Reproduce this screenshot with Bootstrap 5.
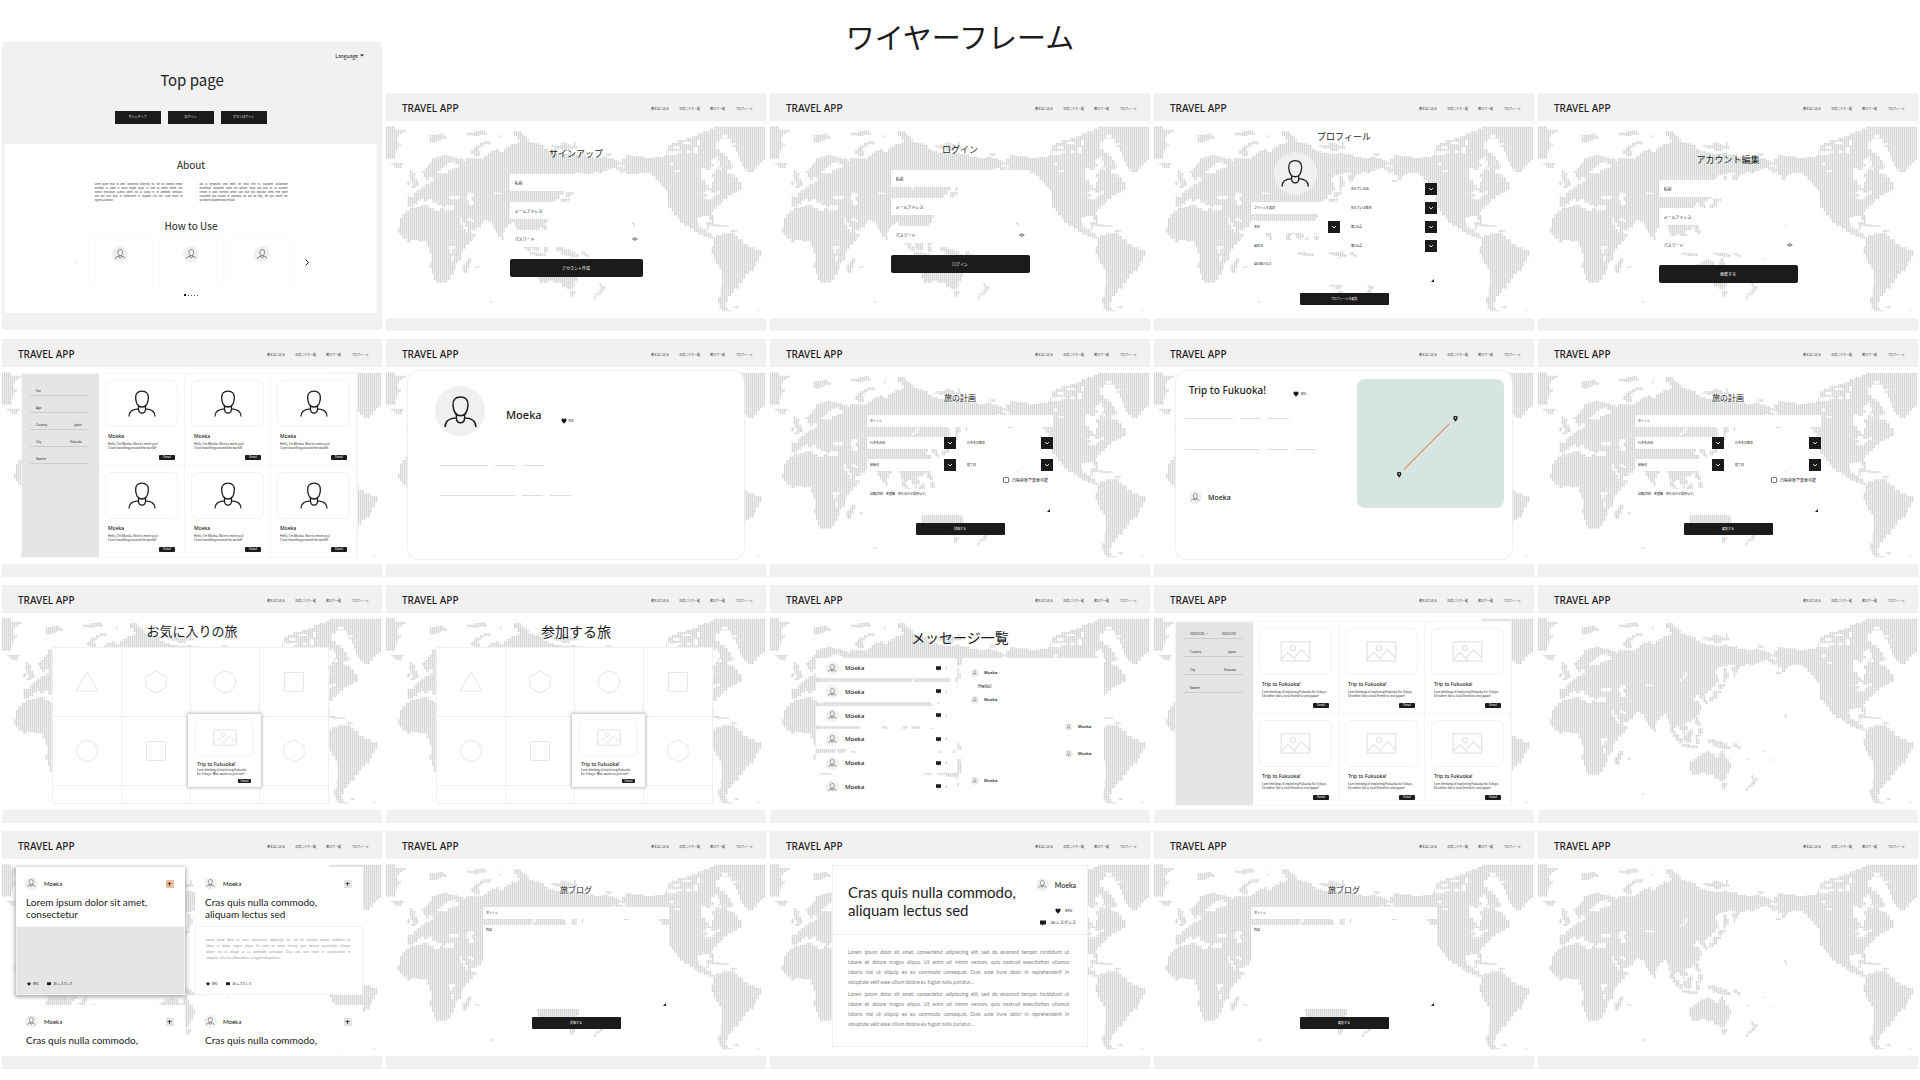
<!DOCTYPE html>
<html lang="ja">
<head>
<meta charset="utf-8">
<meta name="viewport" content="width=device-width, initial-scale=1">
<title>ワイヤーフレーム</title>
<link href="https://cdn.jsdelivr.net/npm/bootstrap@5.3.0/dist/css/bootstrap.min.css" rel="stylesheet">
<style>
  body { font-family: "Noto Sans", "Noto Sans CJK JP", sans-serif; color: #1b1b1b; background: #fff; font-size: 3px; line-height: 4px; }
  a, a:hover { color: inherit; text-decoration: none; }
  button { border: 0; padding: 0; font: inherit; }
  h1, h2, h3, p { margin: 0; font-weight: 400; }
  svg { display: block; }
  .jp { font-family: "Noto Sans CJK JP", sans-serif; }
  .gill { font-family: Lato, "Noto Sans CJK JP", sans-serif; }

  /* board of screens */
  .board { display: grid; grid-template-columns: repeat(5, minmax(0, 1fr)); column-gap: 4px; row-gap: 8px; padding: 0 2px; }
  .board-title { grid-area: 1 / 1 / 2 / 6; height: 85px; padding-top: 14px; font-size: 29px; line-height: 44px; text-align: center; }
  .top-page { grid-area: 1 / 1 / 3 / 2; align-self: end; height: 288px; margin-bottom: 1px; background: #f1f1f1; }
  .second { grid-column: 2; }
  .bar { height: 28px; background: #f1f1f1; padding: 1px 13px 0 16px; }
  .brand, .brand:hover { font-size: 10px; line-height: 14px; font-weight: 500; }
  .bar nav { gap: 10px; padding-top: 3px; color: #333; }
  .foot { height: 13px; background: #f1f1f1; }
  .stage { display: grid; height: 197px; overflow: hidden; }
  .stage > * { grid-area: 1 / 1; min-width: 0; }
  .world { width: 100%; height: 197px; }

  /* forms */
  .ttl { font-size: 9px; line-height: 12px; text-align: center; }
  .ttl-s { font-size: 8px; margin-bottom: 11px; }
  .ttl-l { font-size: 14px; line-height: 20px; padding: 8px 0 6px; text-align: center; }
  .ttl-l.long { font-size: 13px; }
  .ttl-l.mid { padding: 14px 0 11px; }
  .form-in { width: 133px; gap: 11px; padding-top: 27px; }
  .form-in .ttl { margin-bottom: 3px; }
  .form-in.wide { width: 139px; padding-top: 23px; }
  .form-in.wide.down { padding-top: 33px; }
  .box { display: flex; align-items: center; height: 17px; padding: 0 5px; background: #fff; }
  .box input, .pick select, .pick input, .note, .side input { border: 0; outline: 0; background: transparent; color: #222; padding: 0; font: inherit; min-width: 0; width: 100%; appearance: none; resize: none; }
  .box input { font-size: 4px; line-height: 6px; height: 6px; }
  ::placeholder { color: #222; opacity: 1; }
  .btn-dark1 { background: #1b1b1b; color: #fff; border-radius: 2px; height: 18px; margin-top: 1px; font-size: 4px; line-height: 17px; }
  .btn-dark2 { background: #1b1b1b; color: #fff; border-radius: 1px; height: 12px; width: 89px; line-height: 12px; }
  .sheet { width: 186px; padding-top: 25px; }
  .sheet.up { padding-top: 10px; }
  .pair { display: flex; justify-content: space-between; align-items: flex-end; margin: 9px 0 7px; }
  .pair > div { display: flex; flex-direction: column; width: 89px; gap: 7px; }
  .rows { display: flex; flex-direction: column; gap: 10px; }
  .duo { display: grid; grid-template-columns: 89px 89px; justify-content: space-between; row-gap: 10px; }
  .pick { display: flex; align-items: center; height: 12px; padding-left: 3px; background: #fff; }
  .pick select, .pick input { height: 8px; line-height: 8px; }
  .pick svg { width: 12px; height: 12px; flex: none; }
  .note { display: block; background: #fff; padding: 3px; height: 26px; }
  .note.tall { height: 84px; }
  .note-wrap { display: flex; align-items: flex-end; background: #fff; margin: 6px 0 8px; }
  .note-wrap svg { width: 3px; height: 3px; flex: none; margin: 3px; }
  .agree { display: flex; justify-content: flex-end; align-items: center; gap: 3px; margin: 6px 5px 0 0; font-size: 4px; line-height: 6px; }
  .tick { appearance: none; width: 6px; height: 6px; border: 1px solid #777; border-radius: 1px; background: #fff; margin: 0; }

  /* avatars */
  .face { display: inline-flex; align-items: center; justify-content: center; flex: none; border-radius: 50%; background: #f0f0f0; }
  .face svg { width: 66%; height: 66%; }
  .f43 { width: 43px; height: 43px; align-self: center; } .f50 { width: 50px; height: 50px; } .f16 { width: 16px; height: 16px; }
  .f13 { width: 13px; height: 13px; } .f8 { width: 8px; height: 8px; }
  .nm { font-size: 6px; line-height: 8px; font-weight: 500; margin-left: 6px; }
  .nm7 { font-size: 7px; line-height: 10px; font-weight: 500; margin-left: 6px; }
  .who-line { display: flex; align-items: center; }

  /* catalogue screens */
  .cat { width: 337px; height: 185px; margin: 6px 0 0 19px; border: 1px solid #f5f5f5; background: #fff; }
  .cat.low { margin: 8px 0 0 21px; }
  .side { width: 77px; background: #e5e5e5; padding: 13px 10px 0 8px; }
  .side .ln { display: flex; justify-content: space-between; height: 9px; margin-bottom: 8px; padding: 2px 7px 0 6px; border-bottom: 1px solid #ccc; width: 100%; background: transparent; text-align: left; white-space: nowrap; }
  .low .side { padding-top: 8px; }
  .low .side .ln { margin-bottom: 9px; }
  .side input { height: 4px; text-align: right; }
  .tiles { display: grid; grid-template-columns: repeat(3, 1fr); grid-template-rows: 92px 92px; flex: 1; }
  .tile { border-right: 1px solid #f5f5f5; border-bottom: 1px solid #f5f5f5; padding: 6px; }
  .pic { display: flex; align-items: center; justify-content: center; height: 47px; border: 1px solid #f3f3f3; border-radius: 6px; }
  .who { font-size: 5px; line-height: 6px; font-weight: 500; margin: 6px 3px 3px; }
  .blurb { margin: 0 3px 5px; white-space: nowrap; }
  .more { display: block; background: #1b1b1b; color: #fff; border-radius: 1px; width: 16px; height: 5px; line-height: 5px; margin: 0 3px 0 auto; }

  /* detail screens */
  .panel-r { width: 336px; height: 188px; margin: 4px 0 0 22px; border-radius: 11px; background: #fff; box-shadow: 0 0 2px 1px #eee; }
  .hero { display: flex; align-items: center; padding: 15px 0 0 27px; }
  .hero h2 { font-size: 11px; line-height: 16px; font-weight: 500; margin: 7px 19px 0 21px; }
  .hero .react { margin-top: 19px; }
  .rules { display: flex; gap: 7px; margin: 29px 0 0 32px; }
  .rules i { height: 1px; width: 21px; background: #dcdcdc; }
  .rules i.w48 { width: 48px; } .rules i.w75 { width: 75px; }
  .trip { padding: 12px 0 0 9px; }
  .trip h2 { font-size: 10px; line-height: 14px; font-weight: 500; margin: 0 27px 0 4px; white-space: nowrap; }
  .trip .react { margin-top: 7px; }
  .trip .rules { margin: 21px 0 30px; }
  .trip .who-line { margin: 41px 0 0 4px; }
  .route { width: 147px; height: 129px; border-radius: 8px; background: #d6e5df; margin: 8px 8px 0 0; }

  /* shape grid */
  .shapes { display: grid; grid-template-columns: repeat(4, 69px); grid-template-rows: 69px 69px 18px; border: solid #f0f0f0; border-width: 1px 0 0 1px; background: #fff; width: 277px; margin-left: 50px; }
  .shapes > div { display: flex; align-items: center; justify-content: center; border: solid #f0f0f0; border-width: 0 1px 1px 0; position: relative; }
  .pop { position: absolute; left: -3px; top: -3px; width: 73px; height: 73px; background: #fff; box-shadow: 0 0 3px 1px #bbb; padding: 5px 7px; z-index: 1; }
  .pop .pic { height: 37px; border-radius: 4px; }
  .pop .who { margin: 5px 2px 1px; }
  .pop .blurb { margin: 0 2px 3px; }
  .pop .more { width: 13px; height: 4px; line-height: 4px; }

  /* messages */
  .mailroom { display: flex; gap: 5px; padding-left: 46px; }
  .inbox { display: flex; flex-direction: column; justify-content: space-between; width: 141px; height: 139px; }
  .mail { display: flex; align-items: center; height: 20px; padding: 0 10px; background: #fff; border-radius: 2px; }
  .talk { width: 142px; height: 139px; background: #fff; border-radius: 2px; padding: 11px 9px; }
  .said { display: flex; align-items: center; gap: 5px; height: 8px; width: 30px; margin-bottom: 19px; font-size: 4px; font-weight: 600; }
  .said.mine { margin-left: auto; }
  .said.first { margin-bottom: 6px; }
  .talk p { font-size: 5px; line-height: 7px; margin: 0 0 6px 7px; }

  /* blog */
  .posts { display: grid; grid-template-columns: 169px 168px; column-gap: 10px; grid-auto-rows: 128px; row-gap: 10px; height: 190px; overflow: hidden; padding: 8px 0 0 14px; align-content: start; }
  .post { background: #fff; }
  .post.on { box-shadow: 0 1px 4px 1px #aaa; }
  .post .hd { height: 59px; padding: 10px 11px 0 9px; }
  .post h3 { font-size: 10px; line-height: 12px; margin: 6px 0 0 1px; white-space: nowrap; }
  .post .bd { height: 69px; padding: 10px 12px 0 10px; border: 1px solid #f3f3f3; }
  .post.on .bd { background: #e5e5e5; }
  .plus { width: 8px; height: 8px; background: #e3e3e3; margin-left: auto; }
  .on .plus { background: #f2bd9c; }
  .lor { color: #999; line-height: 6px; white-space: nowrap; height: 45px; }
  .lor span, .essay span, .tiny span { display: block; text-align-last: justify; }
  .acts { display: flex; gap: 9px; }
  .react { display: flex; align-items: center; gap: 2px; white-space: nowrap; }
  .react svg { width: 4px; height: 4px; }
  .react.big svg { width: 6px; height: 6px; }
  .article { width: 256px; height: 182px; margin: 6px 0 0 62px; background: #fff; border: 1px solid #f0f0f0; }
  .art-head { display: flex; justify-content: space-between; height: 69px; border-bottom: 1px solid #f0f0f0; padding: 12px 11px 0 15px; margin-bottom: 12px; }
  .art-head h2 { font-size: 15px; line-height: 18px; padding-top: 5px; white-space: nowrap; }
  .art-side { display: flex; flex-direction: column; align-items: flex-end; font-size: 4px; line-height: 6px; }
  .art-side .react { gap: 4px; margin-top: 6px; }
  .art-side .who-line + .react { margin: 17px 4px 0 0; }
  .essay { color: #808080; font-size: 5px; line-height: 10px; white-space: nowrap; width: 221px; margin: 0 0 2px 15px; }

  /* top page */
  .lang { display: flex; justify-content: flex-end; padding: 10px 18px 0 0; }
  .lang button { display: flex; align-items: center; gap: 2px; background: transparent; font-size: 5px; line-height: 7px; }
  .top-h { font-size: 15px; line-height: 20px; margin-top: 11px; text-align: center; }
  .top-acts { display: flex; justify-content: center; gap: 7px; margin: 21px 3px 20px 0; }
  .tbtn { width: 46px; height: 13px; line-height: 13px; background: #1b1b1b; color: #fff; }
  .intro { height: 169px; margin: 0 5px 0 3px; padding-top: 14px; background: #fff; }
  .intro h2 { font-size: 10px; line-height: 14px; text-align: center; }
  .tiny-cols { display: flex; justify-content: center; gap: 17px; margin: 11px 0 16px; }
  .tiny { font-size: 2px; line-height: 4px; width: 88px; white-space: nowrap; }
  .deck { display: flex; justify-content: center; align-items: center; gap: 10px; margin-top: 5px; }
  .deck > div { display: flex; gap: 6px; }
  .deck button { background: transparent; }
  .how { width: 65px; height: 48px; border: 1px solid #fafafa; padding-top: 7px; text-align: center; }
  .dots { display: flex; justify-content: center; align-items: center; gap: 2px; margin-top: 8px; }
  .dots i { width: 1px; height: 1px; background: #555; } .dots i:first-child { width: 2px; height: 2px; background: #111; }
</style>
<script src="https://cdn.jsdelivr.net/npm/bootstrap@5.3.0/dist/js/bootstrap.bundle.min.js"></script>
</head>
<body>

<svg width="0" height="0" class="position-absolute" aria-hidden="true">
  <defs>
    <pattern id="grain" x="6" y="93" width="6" height="6" patternUnits="userSpaceOnUse"><rect width="6" height="6" fill="#ebedec"/><rect width="3" height="6" fill="#dcdfde"/><rect width="3" height="3" fill="#cfd4d2"/></pattern>
    <symbol id="map" viewBox="6 93 1140 591" preserveAspectRatio="none">
      <g fill="url(#grain)">
        <path d="M5 109H33V119H66V127H55V133H45V142H39V150H42V160H50V168H43V178H38V190H34V206H5Z"/>
        <path d="M20 218H58V226H53V234H35V229H28V223H20Z"/>
        <path d="M137 135H160V131H180V138H188V147H170V153H158V157H137Z"/>
        <path d="M246 128H272V123H290V121H303V126H308V134H285V138H268V136H250Z"/>
        <path d="M346 138h6v5h-6zM350 130h5v5h-5zM275 528h10v5h-10zM316 634h10v5h-10zM742 397h10v13h-5v-8h-5zM1120 659h7v4h-7zM665 190H683V197H665ZM703 532h5v5h-5zM680 505h5v5h-5zM632 530h6v6h-6zM1050 648h14v7h-12z"/>
        <path d="M260 192V180H268V172H276V166H288V158H298V154H320V163H300V168H290V175H284V184H288V198H270V192Z"/>
        <path d="M390 124H411V131H418V137H428V145H434V156H408V150H400V138H390Z"/>
        <path d="M500 166H530V158H548V163H560V168H570V156H576V168H580V176H556V183H534V176H512V172H500Z"/>
        <path d="M75 240H85V248H95V256H92V266H100V276H104V288H95V294H80V288H86V276H80V265H76V255H80ZM68 274H78V286H68Z"/>
        <path d="M118 262V250H113V242H122V234H130V226H137V218H143V204H158V198H175V194H192V198H203V202H222V206H238V213H246V205H300V198H310V190H320V182H335V178H345V185H360V176H368V170H380V162H400V157H415V152H432V156H450V160H465V165H480V176H492V184H510V188H530V191H560V188H575V193H605V200H630V204H655V200H672V205H690V210H703V216H712V224H702V230H716V240H722V248H706V240H696V234H684V238H670V243H656V250H640V246H628V252H612V262H606V272H598V284H592V268H588V256H596V248H576V252H560V256H545V264H538V276H545V290H548V302H540V314H528V326H516V334H506V345H510V360H500V350H490V338H480V348H474V356H490V368H497V384H492V400H482V412H468V420H452V424H448V432H456V444H446V456H440V444H430V432H420V438H414V452H420V464H412V450H404V428H398V410H392V396H382V404H372V414H362V428H357V438H360V450H352V440H342V430H336V420H330V408H325V396H313V390H300V400H291V412H278V420H262V432H276V442H266V454H256V464H246V476H236V488H232V512H222V520H215V540H210V555H200V570H190V578H156V570H150V552H144V534H137V518H142V490H136V470H128V454H102V450H80V456H68V446H55V436H48V428H42V412H48V384H55V372H64V362H76V353H96V350H70V320H90V308H98V300H110V290H122V282H138V275H146V262H134V270H126V262Z"/>
        <path d="M562 258H572V272H578V290H570V302H562ZM546 306H570V314H560V322H546ZM530 326H556V334H544V350H532V358H514V366H508V356H520V344H530Z"/>
        <path d="M476 406H488V420H494V432H484V426H476ZM486 438H500V456H488ZM402 436H412V446H420V456H430V468H440V484H428V476H418V466H410V452H402ZM436 486H462V490H486V498H452V494H436ZM442 458H452V448H462V442H470V460H466V482H448V476H442ZM478 458H494V464H484V470H492V486H480ZM516 472H540V478H560V484H574V492H584V502H560V498H544V494H530V484H516ZM592 484H604V492H614V502H604V496H592Z"/>
        <path d="M460 545V538H472V530H482V522H494V514H508V508H520V512H530V516H536V526H548V514H554V504H562V516H568V530H578V542H585V560H580V574H572V590H566V598H548V590H534V578H508V572H492V578H466V566H460ZM557 603H573V612H569V620H557Z"/>
        <path d="M645 580H653V588H665V598H658V608H650V616H636V628H628V618H634V610H644V600H650V590H645Z"/>
        <path d="M235 524H245V514H250V506H262V520H256V534H250V548H236V540H235Z"/>
        <path d="M714 206H725V196H745V199H780V204H812V200H840V196H846V184H852V166H862V158H880V150H905V143H925V138H940V130H956V124H978V116H990V110H1144V210H1136V216H1128V226H1118V238H1110V246H1090V238H1080V228H1074V216H1068V200H1062V185H1056V172H1046V164H1026V160H1006V166H996V178H1008V188H1022V198H1032V210H1040V224H1046V236H1040V252H1052V262H1062V276H1074V300H1060V308H1046V316H1030V326H1018V336H1010V346H998V356H988V366H984V376H990V396H982V390H975V378H955V382H940V398H944V412H956V418H968V408H974V420H968V428H982V440H992V446H974V440H958V434H942V426H930V416H916V408H900V398H888V388H880V376H870V364H862V354H852V336H850V300H842V290H834V280H824V270H814V258H802V250H786V248H768V252H756V260H748V270H735V276H720V270H738V256H726V244H715V236H722V226H714Z"/>
        <path d="M968 396H990V402H1006V406H1034V411H1000V408H968ZM1040 419H1058V427H1040Z"/>
        <path d="M982 492V470H988V446H996V436H1014V430H1052V438H1062V448H1076V462H1092V472H1112V480H1132V500H1124V514H1116V530H1110V544H1096V552H1084V566H1076V580H1064V596H1050V608H1042V618H1032V636H1026V652H1032V660H1046V664H1014V656H1006V640H1002V622H1010V590H1014V560H1012V536H1004V522H996V508H988V492Z"/>
      </g>
      <g fill="#fff">
        <path d="M88 351V342H100V332H110V326H120V334H132V326H145V338H158V346H174V352H186V346H210V360H180V354H168V362H150V354H134V346H112V350Z"/>
        <path d="M194 318H224V328H196ZM252 310H268V320H262V332H268V345H254V330H248V318H252ZM160 250V242H170V234H180V226H190V218H206V214H212V222H224V234H206V240H192V250ZM330 308H352V312H330ZM432 292H440V284H446V272H452V284H446V292H438V298H432Z"/>
        <path d="M194 468H213V476H205V488H198V476H194ZM203 498H208V514H203ZM228 385H234V398H242V412H250V426H246V416H238V404H230V396H228ZM252 385H262V390H270V396H262V392H252Z"/>
        <path d="M952 234H966V240H980V230H990V222H982V208H992V202H1002V214H1008V228H1002V238H994V250H984V262H990V276H984V294H974V284H964V270H952ZM956 308H966V300H980V308H1000V304H1008V312H994V318H986V328H962V320H970V312H956Z"/>
        <path d="M1014 134H1030V144H1014ZM995 155H1008V146H1040V160H1058V165H995ZM868 168H886V176H868ZM896 156H920V162H896ZM850 184H894V190H880V196H850ZM930 172H942V190H930ZM940 150H948V166H940ZM872 240H888V246H872ZM858 218H868V226H858ZM908 182H920V190H908ZM1030 238H1040V250H1030ZM1004 232H1012V240H1004Z"/>
      </g>
    </symbol>
    <symbol id="person" viewBox="0 0 88 84"><g fill="none" stroke="#1b1b1b" stroke-width="4"><path d="M44 3C57 3 65 11 64 25C63 42 56 53 44 53S25 42 24 25C23 11 31 3 44 3Z"/><path d="M33 50V60C34 76 54 76 55 60V50M3 83C3 67 15 60 33 59M55 59C73 60 85 67 85 83"/></g></symbol>
    <symbol id="image" viewBox="0 0 72 50"><path d="M2 2H70V48H2ZM2 44L18 27L38 48M32 42L50 20L70 41M24 17A6 6 0 1 0 36 17A6 6 0 1 0 24 17" fill="none" stroke="#e3e3e3" stroke-width="3"/></symbol>
    <symbol id="heart" viewBox="0 0 16 16"><path d="M8 15L2 8.500C-1 4 4-1 8 3C12-1 17 4 14 8.500Z" fill="#1b1b1b"/></symbol>
    <symbol id="chat" viewBox="0 0 16 16"><path d="M0 1H16V12H9L6 16V12H0Z" fill="#1b1b1b"/></symbol>
    <symbol id="drop" viewBox="0 0 36 36"><path d="M0 0H36V36H0Z" fill="#1b1b1b"/><path d="M12 15L18 21L24 15" fill="none" stroke="#fff" stroke-width="2.500"/></symbol>
    <symbol id="eye" viewBox="0 0 18 12"><path d="M1 6Q9-3 17 6Q9 15 1 6Z" fill="none" stroke="#444" stroke-width="2"/><circle cx="9" cy="6" r="2" fill="#444"/></symbol>
    <symbol id="grip" viewBox="0 0 8 8"><path d="M8 0V8H0Z" fill="#1b1b1b"/></symbol>
    <symbol id="pin" viewBox="0 0 14 18"><path d="M7 18C2 12 0 9 0 6.500C0 2.500 3 0 7 0S14 2.500 14 6.500C14 9 12 12 7 18ZM7 4A2.500 2.500 0 1 0 7 9A2.500 2.500 0 1 0 7 4" fill="#1b1b1b" fill-rule="evenodd"/></symbol>
    <symbol id="add" viewBox="0 0 8 8"><path d="M3.500 2V6M1.500 3.500H5.500" stroke="#444" fill="none"/></symbol>
    <symbol id="s-tri" viewBox="0 0 24 24"><path d="M12 2L23 21H1Z" fill="none" stroke="#e6e6e6"/></symbol>
    <symbol id="s-hex" viewBox="0 0 24 24"><path d="M12 1L22 6.500V17.500L12 23L2 17.500V6.500Z" fill="none" stroke="#e6e6e6"/></symbol>
    <symbol id="s-cir" viewBox="0 0 24 24"><circle cx="12" cy="12" r="10.500" fill="none" stroke="#e6e6e6"/></symbol>
    <symbol id="s-sq" viewBox="0 0 24 24"><path d="M2.500 2.500H21.500V21.500H2.500Z" fill="none" stroke="#e6e6e6"/></symbol>
  </defs>
</svg>

<template id="t-bar"><header class="bar d-flex align-items-center justify-content-between"><a href="#" class="brand">TRAVEL APP</a><nav class="d-flex jp"><a href="#">旅をはじめる</a><a href="#">お気に入り一覧</a><a href="#">旅ログ一覧</a><a href="#">プロフィール</a></nav></header></template>
<template id="t-foot"><footer class="foot"></footer></template>
<template id="t-map"><svg class="world" aria-hidden="true"><use href="#map"/></svg></template>
<template id="t-person"><article class="tile"><div class="pic"><svg width="28" height="27"><use href="#person"/></svg></div><h3 class="who">Moeka</h3><p class="blurb">Hello, I'm Moeka. Nice to meet you!<br>I love travelling around the world!!</p><button class="more">Detail</button></article></template>
<template id="t-trip"><article class="tile"><div class="pic"><svg width="31" height="21"><use href="#image"/></svg></div><h3 class="who">Trip to Fukuoka!</h3><p class="blurb">I am thinking of exploring Fukuoka for 3 days.<br>I'd rather like a local friend to visit Japan!</p><button class="more">Detail</button></article></template>
<template id="t-mail"><a href="#" class="mail"><span class="face f13"><svg><use href="#person"/></svg></span><span class="nm">Moeka</span><svg class="ms-auto me-1" width="5" height="5"><use href="#chat"/></svg><span class="text-secondary">2</span></a></template>
<template id="t-how"><div class="how d-block"><span class="face f16"><svg><use href="#person"/></svg></span></div></template>
<template id="t-by"><div class="who-line"><span class="face f13"><svg><use href="#person"/></svg></span><span class="nm">Moeka</span><button class="plus" aria-label="追加"><svg width="8" height="8"><use href="#add"/></svg></button></div></template>
<template id="t-acts"><div class="acts"><span class="react"><svg><use href="#heart"/></svg>890</span><span class="react"><svg><use href="#chat"/></svg>36 レスポンス</span></div></template>
<template id="t-shapes">
  <div><svg width="24" height="24"><use href="#s-tri"/></svg></div><div><svg width="24" height="24"><use href="#s-hex"/></svg></div><div><svg width="24" height="24"><use href="#s-cir"/></svg></div><div><svg width="24" height="24"><use href="#s-sq"/></svg></div>
  <div><svg width="24" height="24"><use href="#s-cir"/></svg></div><div><svg width="24" height="24"><use href="#s-sq"/></svg></div>
  <div><article class="pop"><div class="pic"><svg width="24" height="17"><use href="#image"/></svg></div><h3 class="who">Trip to Fukuoka!</h3><p class="blurb">I am thinking of exploring Fukuoka<br>for 3 days. Who wants to join me?</p><button class="more">Detail</button></article></div>
  <div><svg width="24" height="24"><use href="#s-hex"/></svg></div><div></div><div></div><div></div><div></div>
</template>
<template id="t-login">
  <div class="box"><input aria-label="名前" placeholder="名前"></div>
  <div class="box"><input aria-label="メールアドレス" placeholder="メールアドレス"></div>
  <div class="box"><input aria-label="パスワード" placeholder="パスワード"><svg width="6" height="4"><use href="#eye"/></svg></div>
</template>
<template id="t-plan">
  <div class="rows">
    <div class="pick"><input aria-label="タイトル" placeholder="タイトル"></div>
    <div class="duo">
      <div class="pick"><select aria-label="行き先の国"><option>行き先の国</option></select><svg><use href="#drop"/></svg></div>
      <div class="pick"><select aria-label="行き先の都市"><option>行き先の都市</option></select><svg><use href="#drop"/></svg></div>
      <div class="pick"><select aria-label="開始日"><option>開始日</option></select><svg><use href="#drop"/></svg></div>
      <div class="pick"><select aria-label="終了日"><option>終了日</option></select><svg><use href="#drop"/></svg></div>
    </div>
  </div>
  <label class="agree"><input type="checkbox" class="tick"> 日程前後で変更可能</label>
  <div class="note-wrap"><textarea class="note" aria-label="詳細" placeholder="詳細(目的、希望職、待ち合わせ場所など)"></textarea><svg><use href="#grip"/></svg></div>
</template>
<template id="t-write">
  <div class="pick"><input aria-label="タイトル" placeholder="タイトル"></div>
  <div class="note-wrap"><textarea class="note tall" aria-label="内容" placeholder="内容"></textarea><svg><use href="#grip"/></svg></div>
</template>

<main class="board">
  <h1 class="board-title jp">ワイヤーフレーム</h1>

  <section class="top-page jp">
    <div class="lang"><button>Language <svg width="4" height="3" viewBox="0 0 8 6"><path d="M0 1H8L4 5Z" fill="#1b1b1b"/></svg></button></div>
    <h2 class="top-h">Top page</h2>
    <div class="top-acts"><button class="tbtn">サインアップ</button><button class="tbtn">ログイン</button><button class="tbtn">ゲストログイン</button></div>
    <div class="intro">
      <h2>About</h2>
      <div class="tiny-cols">
        <p class="tiny"><span>Lorem ipsum dolor sit amet, consectetur adipiscing elit, sed do eiusmod tempor<br>incididunt ut labore et dolore magna aliqua. Ut enim ad minim veniam, quis<br>nostrud exercitation ullamco laboris nisi ut aliquip ex ea commodo consequat.<br>Duis aute irure dolor in reprehenderit in voluptate velit esse cillum dolore eu</span>fugiat nulla pariatur.</p>
        <p class="tiny"><span>Sed ut perspiciatis unde omnis iste natus error sit voluptatem accusantium<br>doloremque laudantium, totam rem aperiam, eaque ipsa quae ab illo inventore<br>veritatis et quasi architecto beatae vitae dicta sunt explicabo. Nemo enim ipsam<br>voluptatem quia voluptas sit aspernatur aut odit aut fugit, sed quia dolores eos</span>qui ratione voluptatem sequi nesciunt.</p>
      </div>
      <h2>How to Use</h2>
      <div class="deck">
        <button aria-label="前へ"><svg width="4" height="7" viewBox="0 0 4 7"><path d="M3.500.5L.5 3.500L3.500 6.500" fill="none" stroke="#d8eefb"/></svg></button>
        <div data-fill="t-how" data-n="3"></div>
        <button aria-label="次へ"><svg width="4" height="7" viewBox="0 0 4 7"><path d="M.5.5L3.500 3.500L.5 6.500" fill="none" stroke="#1b1b1b"/></svg></button>
      </div>
      <div class="dots"><i></i><i></i><i></i><i></i><i></i></div>
    </div>
  </section>

  <section class="screen second"><div class="stage"><form class="jp mx-auto form-in d-flex flex-column">
    <h2 class="ttl" data-after="t-login">サインアップ</h2>
    <button type="button" class="btn-dark1">アカウント作成</button></form></div></section>

  <section class="screen"><div class="stage"><form class="jp mx-auto form-in wide d-flex flex-column">
    <h2 class="ttl" data-after="t-login">ログイン</h2>
    <button type="button" class="btn-dark1">ログイン</button></form></div></section>

  <section class="screen"><div class="stage"><form class="jp mx-auto sheet up">
    <h2 class="ttl">プロフィール</h2>
    <div class="pair">
      <div>
        <span class="face f43"><svg><use href="#person"/></svg></span>
        <div class="pick"><input aria-label="ファイルを選択" placeholder="ファイルを選択"></div>
        <div class="pick"><select aria-label="性別"><option>性別</option></select><svg><use href="#drop"/></svg></div>
        <div class="pick"><input aria-label="誕生日" placeholder="誕生日"></div>
      </div>
      <div>
        <div class="pick"><select aria-label="住んでいる国"><option>住んでいる国</option></select><svg><use href="#drop"/></svg></div>
        <div class="pick"><select aria-label="住んでいる都市"><option>住んでいる都市</option></select><svg><use href="#drop"/></svg></div>
        <div class="pick"><select aria-label="第1言語"><option>第1言語</option></select><svg><use href="#drop"/></svg></div>
        <div class="pick"><select aria-label="第2言語"><option>第2言語</option></select><svg><use href="#drop"/></svg></div>
      </div>
    </div>
    <div class="note-wrap"><textarea class="note" aria-label="自己紹介" placeholder="自己紹介など"></textarea><svg><use href="#grip"/></svg></div>
    <button type="button" class="btn-dark2 d-block mx-auto">プロフィールを編集</button></form></div></section>

  <section class="screen"><div class="stage"><form class="jp mx-auto form-in wide down d-flex flex-column">
    <h2 class="ttl" data-after="t-login">アカウント編集</h2>
    <button type="button" class="btn-dark1">更新する</button></form></div></section>

  <section class="screen"><div class="stage"><div class="cat d-flex">
    <form class="side"><label class="ln">Sex <input aria-label="Sex"></label><label class="ln">Age <input aria-label="Age"></label><label class="ln">Country <input value="Japan"></label><label class="ln">City <input value="Fukuoka"></label><button type="button" class="ln">Search</button></form>
    <div class="tiles" data-fill="t-person" data-n="6"></div></div></div></section>

  <section class="screen"><div class="stage"><div class="panel-r">
    <div class="hero"><span class="face f50"><svg><use href="#person"/></svg></span><h2>Moeka</h2><span class="react big"><svg><use href="#heart"/></svg> 890</span></div>
    <div class="rules"><i class="w48"></i><i></i><i></i></div>
    <div class="rules"><i class="w75"></i><i></i><i></i></div></div></div></section>

  <section class="screen"><div class="stage"><form class="jp mx-auto sheet">
    <h2 class="ttl ttl-s" data-after="t-plan">旅の計画</h2>
    <button type="button" class="btn-dark2 d-block mx-auto">投稿する</button></form></div></section>

  <section class="screen"><div class="stage"><div class="panel-r d-flex justify-content-between">
    <div class="trip"><div class="d-flex"><h2>Trip to Fukuoka!</h2><span class="react big"><svg><use href="#heart"/></svg> 890</span></div>
      <div class="rules"><i class="w48"></i><i></i><i></i></div><div class="rules mb-0"><i class="w75"></i><i></i><i></i></div>
      <div class="who-line"><span class="face f13"><svg><use href="#person"/></svg></span><span class="nm7">Moeka</span></div></div>
    <svg class="route" viewBox="616 132 440 387"><path d="M756 404L893 266" stroke="#df8f6c" stroke-width="3.500"/><use href="#pin" x="904" y="242" width="14" height="18"/><use href="#pin" x="735" y="410" width="14" height="18"/></svg></div></div></section>

  <section class="screen"><div class="stage"><form class="jp mx-auto sheet">
    <h2 class="ttl ttl-s" data-after="t-plan">旅の計画</h2>
    <button type="button" class="btn-dark2 d-block mx-auto">編集する</button></form></div></section>

  <section class="screen"><div class="stage"><div><h2 class="ttl-l long jp">お気に入りの旅</h2><div class="shapes" data-fill="t-shapes" data-n="1"></div></div></div></section>
  <section class="screen"><div class="stage"><div><h2 class="ttl-l jp">参加する旅</h2><div class="shapes" data-fill="t-shapes" data-n="1"></div></div></div></section>

  <section class="screen"><div class="stage"><div><h2 class="ttl-l mid jp">メッセージ一覧</h2>
    <div class="mailroom"><div class="inbox" data-fill="t-mail" data-n="6"></div>
      <div class="talk">
        <div class="said first"><span class="face f8"><svg><use href="#person"/></svg></span>Moeka</div>
        <p>Hello!</p>
        <div class="said"><span class="face f8"><svg><use href="#person"/></svg></span>Moeka</div>
        <div class="said mine"><span class="face f8"><svg><use href="#person"/></svg></span>Moeka</div>
        <div class="said mine"><span class="face f8"><svg><use href="#person"/></svg></span>Moeka</div>
        <div class="said"><span class="face f8"><svg><use href="#person"/></svg></span>Moeka</div>
      </div></div></div></div></section>

  <section class="screen"><div class="stage"><div class="cat low d-flex">
    <form class="side"><label class="ln">2023/2/20 &nbsp; ~ <input value="2023/2/25"></label><label class="ln">Country <input value="Japan"></label><label class="ln">City <input value="Fukuoka"></label><button type="button" class="ln">Search</button></form>
    <div class="tiles" data-fill="t-trip" data-n="6"></div></div></div></section>

  <section class="screen"><div class="stage"></div></section>

  <section class="screen"><div class="stage"><div class="posts gill">
    <article class="post on"><div class="hd"><div data-fill="t-by" data-n="1"></div><h3>Lorem ipsum dolor sit amet,<br>consectetur</h3></div>
      <div class="bd"><div class="lor"></div><div data-fill="t-acts" data-n="1"></div></div></article>
    <article class="post"><div class="hd"><div data-fill="t-by" data-n="1"></div><h3>Cras quis nulla commodo,<br>aliquam lectus sed</h3></div>
      <div class="bd"><p class="lor"><span>Lorem ipsum dolor sit amet, consectetur adipisicing elit, sed do eiusmod tempor incididunt ut<br>labore et dolore magna aliqua. Ut enim ad minim veniam, quis nostrud exercitation ullamco<br>laboris nisi ut aliquip ex ea commodo consequat. Duis aute irure dolor in reprehenderit in</span>voluptate velit esse cillum dolore eu fugiat nulla pariatur...</p><div data-fill="t-acts" data-n="1"></div></div></article>
    <article class="post"><div class="hd"><div data-fill="t-by" data-n="1"></div><h3>Cras quis nulla commodo,</h3></div></article>
    <article class="post"><div class="hd"><div data-fill="t-by" data-n="1"></div><h3>Cras quis nulla commodo,</h3></div></article>
  </div></div></section>

  <section class="screen"><div class="stage"><form class="jp mx-auto sheet">
    <h2 class="ttl ttl-s" data-after="t-write">旅ブログ</h2>
    <button type="button" class="btn-dark2 d-block mx-auto">投稿する</button></form></div></section>

  <section class="screen"><div class="stage"><article class="article gill">
    <div class="art-head"><h2>Cras quis nulla commodo,<br>aliquam lectus sed</h2>
      <div class="art-side"><div class="who-line"><span class="face f13"><svg><use href="#person"/></svg></span><span class="nm7">Moeka</span></div>
        <span class="react big"><svg><use href="#heart"/></svg>890</span>
        <span class="react big"><svg><use href="#chat"/></svg>36 レスポンス</span></div></div>
    <p class="essay"><span>Lorem ipsum dolor sit amet, consectetur adipisicing elit, sed do eiusmod tempor incididunt ut<br>labore et dolore magna aliqua. Ut enim ad minim veniam, quis nostrud exercitation ullamco<br>laboris nisi ut aliquip ex ea commodo consequat. Duis aute irure dolor in reprehenderit in</span>voluptate velit esse cillum dolore eu fugiat nulla pariatur...</p>
    <p class="essay"><span>Lorem ipsum dolor sit amet, consectetur adipisicing elit, sed do eiusmod tempor incididunt ut<br>labore et dolore magna aliqua. Ut enim ad minim veniam, quis nostrud exercitation ullamco<br>laboris nisi ut aliquip ex ea commodo consequat. Duis aute irure dolor in reprehenderit in</span>voluptate velit esse cillum dolore eu fugiat nulla pariatur...</p>
  </article></div></section>

  <section class="screen"><div class="stage"><form class="jp mx-auto sheet">
    <h2 class="ttl ttl-s" data-after="t-write">旅ブログ</h2>
    <button type="button" class="btn-dark2 d-block mx-auto">編集する</button></form></div></section>

  <section class="screen"><div class="stage"></div></section>
</main>

<script>
  const part = id => document.getElementById(id).content.cloneNode(true);
  document.querySelectorAll('[data-fill]').forEach(el => {
    for (let i = 0; i < Number(el.dataset.n); i++) el.append(part(el.dataset.fill));
  });
  document.querySelectorAll('[data-after]').forEach(el => el.after(part(el.dataset.after)));
  document.querySelectorAll('.screen').forEach(el => {
    el.prepend(part('t-bar'));
    el.querySelector('.stage').prepend(part('t-map'));
    el.append(part('t-foot'));
  });
</script>
</body>
</html>
